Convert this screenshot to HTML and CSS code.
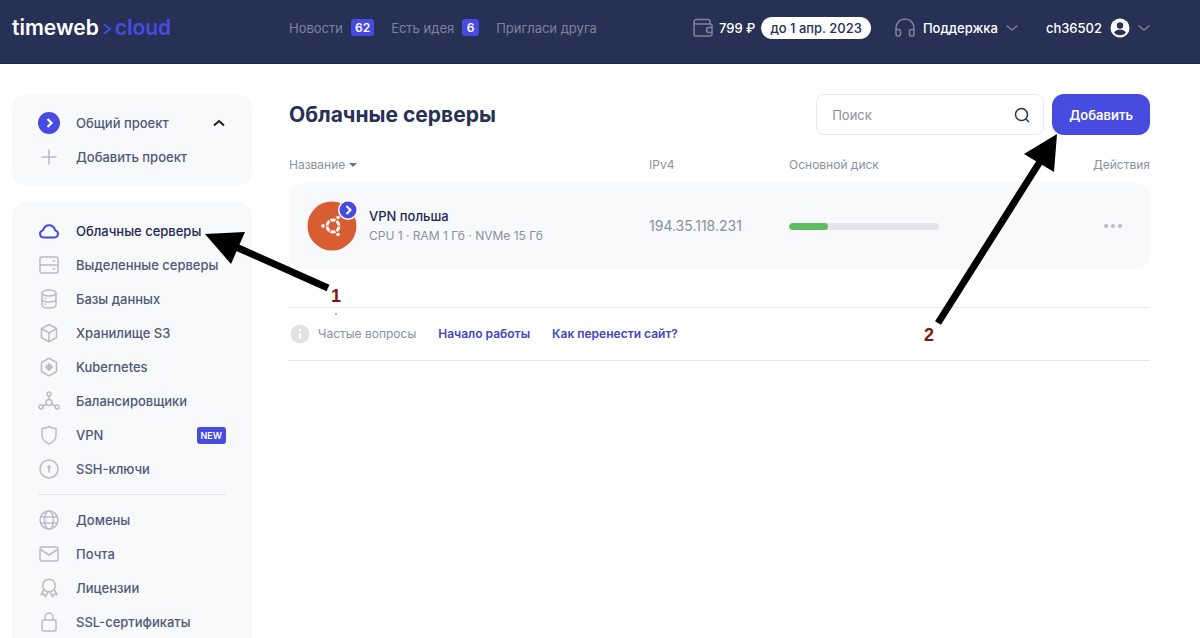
FILE: index.html
```html
<!DOCTYPE html>
<html lang="ru">
<head>
<meta charset="utf-8">
<meta name="viewport" content="width=device-width, initial-scale=1">
<title>Облачные серверы</title>
<link rel="stylesheet" href="styles.css">
</head>
<body>
	<header class="header">
		<a href="#" class="logo">timeweb<svg width="10" height="14" viewBox="0 0 10 14"><path d="M2 2.500l6 4.500-6 4.500"/></svg><span>cloud</span></a>
		<nav class="top_nav">
			<a href="#">Новости <b class="count">62</b></a>
			<a href="#">Есть идея <b class="count">6</b></a>
			<a href="#">Пригласи друга</a>
		</nav>
		<div class="account">
			<a href="#" class="balance">
				<svg class="ico" width="20" height="20" viewBox="0 0 20 20"><path d="M17 6V3.500a2 2 0 0 0-2-2H3.500a2.500 2.500 0 0 0-2.500 2.500v12a2 2 0 0 0 2 2h14a2 2 0 0 0 2-2V8a2 2 0 0 0-2-2H3.500A2.300 2.300 0 0 1 1 4M19 9.500h-3a2.500 2.500 0 0 0 0 5h3"/></svg>
				<span>799 ₽</span>
				<span class="until">до 1 апр. 2023</span>
			</a>
			<button type="button" class="support">
				<svg class="ico" width="20" height="20" viewBox="0 0 20 20"><path d="M1 16.500V10a9 9 0 0 1 18 0v6.500M1 11.500h2.500a2 2 0 0 1 2 2V16a2 2 0 0 1-2 2H3a2 2 0 0 1-2-2zM19 11.500h-2.500a2 2 0 0 0-2 2V16a2 2 0 0 0 2 2h.5a2 2 0 0 0 2-2z"/></svg>
				<span>Поддержка</span>
				<svg class="ico" width="12" height="8" viewBox="0 0 12 8"><path d="M1 2l5 4 5-4"/></svg>
			</button>
			<button type="button" class="user">
				<span>ch36502</span>
				<svg width="20" height="20" viewBox="0 0 20 20"><circle cx="10" cy="10" r="9.500" fill="#fff"/><circle cx="10" cy="7.500" r="3.200" fill="#273156"/><path d="M4 14.500c1.300-2 3.400-3 6-3s4.700 1 6 3c-1.500 1.800-3.500 2.800-6 2.800s-4.500-1-6-2.800z" fill="#273156"/></svg>
				<svg class="ico" width="12" height="8" viewBox="0 0 12 8"><path d="M1 2l5 4 5-4"/></svg>
			</button>
		</div>
	</header>

	<div class="page">
		<aside class="sidebar">
			<div class="panel">
				<button type="button" class="item">
					<svg width="22" height="22" viewBox="0 0 22 22"><circle cx="11" cy="11" r="11" fill="#474be0"/><path d="M9.500 7l4 4-4 4" fill="none" stroke="#fff" stroke-width="2.200"/></svg>
					<span>Общий проект</span>
					<svg class="fold" width="14" height="8" viewBox="0 0 14 8"><path d="M2 6.500l5-4.500 5 4.500"/></svg>
				</button>
				<a href="#" class="item">
					<svg class="ico" width="22" height="22" viewBox="0 0 22 22"><path d="M11 4v14M4 11h14"/></svg>
					<span>Добавить проект</span>
				</a>
			</div>

			<nav class="panel">
				<a href="#" class="item current">
					<svg class="ico" width="22" height="22" viewBox="0 0 22 22"><path d="M5.500 17.500a3.600 3.600 0 0 1-.7-7.100C6 7 8 5.200 11 5.200s5.200 1.800 6.200 5.200a3.600 3.600 0 0 1-.7 7.100z"/></svg>
					<span>Облачные серверы</span>
				</a>
				<a href="#" class="item">
					<svg class="ico" width="22" height="22" viewBox="0 0 22 22"><rect x="2" y="3" width="18" height="16" rx="2"/><path d="M2 11h18M15 7h1.500M15 15h1.500"/></svg>
					<span>Выделенные серверы</span>
				</a>
				<a href="#" class="item">
					<svg class="ico" width="22" height="22" viewBox="0 0 22 22"><ellipse cx="11" cy="5" rx="7" ry="3"/><path d="M4 5v12c0 1.700 3.100 3 7 3s7-1.300 7-3V5M4 11c0 1.700 3.100 3 7 3s7-1.300 7-3M7 10v.5M7 16v.5"/></svg>
					<span>Базы данных</span>
				</a>
				<a href="#" class="item">
					<svg class="ico" width="22" height="22" viewBox="0 0 22 22"><path d="M11 2.500l7.500 4v9l-7.500 4.300-7.500-4.300v-9zM3.500 6.500l7.500 4.300 7.500-4.300M11 10.800v9"/></svg>
					<span>Хранилище S3</span>
				</a>
				<a href="#" class="item">
					<svg class="ico" width="22" height="22" viewBox="0 0 22 22"><path d="M11 2.200l7.500 4.300v9L11 19.800l-7.500-4.300v-9z"/><path d="M11 7.500v7M7.500 11h7M9 9l4 4M13 9l-4 4"/><circle cx="11" cy="11" r="2"/></svg>
					<span>Kubernetes</span>
				</a>
				<a href="#" class="item">
					<svg class="ico" width="22" height="22" viewBox="0 0 22 22"><circle cx="11" cy="4" r="2"/><circle cx="11" cy="12.500" r="3"/><circle cx="3" cy="17" r="2"/><circle cx="19" cy="17" r="2"/><path d="M11 6v3.500M8.500 14L5 16M13.500 14l3.500 2"/></svg>
					<span>Балансировщики</span>
				</a>
				<a href="#" class="item">
					<svg class="ico" width="22" height="22" viewBox="0 0 22 22"><path d="M11 2.500c2 1.300 4.500 2 7 2V11c0 4-2.500 7-7 9-4.500-2-7-5-7-9V4.500c2.500 0 5-.7 7-2z"/></svg>
					<span>VPN</span>
					<b class="new">NEW</b>
				</a>
				<a href="#" class="item">
					<svg class="ico" width="22" height="22" viewBox="0 0 22 22"><circle cx="11" cy="11" r="9"/><circle cx="11" cy="9" r="1"/><path d="M11 9v5"/></svg>
					<span>SSH-ключи</span>
				</a>
				<hr>
				<a href="#" class="item">
					<svg class="ico" width="22" height="22" viewBox="0 0 22 22"><circle cx="11" cy="11" r="9"/><ellipse cx="11" cy="11" rx="4.500" ry="9"/><path d="M3 8h16M3 14h16"/></svg>
					<span>Домены</span>
				</a>
				<a href="#" class="item">
					<svg class="ico" width="22" height="22" viewBox="0 0 22 22"><rect x="2" y="4" width="18" height="14" rx="2"/><path d="M2.500 6.500L11 12l8.500-5.500"/></svg>
					<span>Почта</span>
				</a>
				<a href="#" class="item">
					<svg class="ico" width="22" height="22" viewBox="0 0 22 22"><circle cx="11" cy="8.500" r="6.300"/><path d="M6 12.500l-3 5 3-.3 1.500 2.600 2.500-5M16 12.500l3 5-3-.3-1.500 2.600-2.500-5"/></svg>
					<span>Лицензии</span>
				</a>
				<a href="#" class="item">
					<svg class="ico" width="22" height="22" viewBox="0 0 22 22"><rect x="4" y="9" width="14" height="11" rx="2"/><path d="M7 9V6a4 4 0 0 1 8 0v3"/></svg>
					<span>SSL-сертификаты</span>
				</a>
			</nav>
		</aside>

		<main class="main">
			<div class="title_row">
				<h1>Облачные серверы</h1>
				<form class="search">
					<input type="text" placeholder="Поиск" aria-label="Поиск">
					<button type="button" aria-label="Найти"><svg width="16" height="16" viewBox="0 0 16 16"><circle cx="7.500" cy="7.500" r="6"/><path d="M12 12l3 3"/></svg></button>
				</form>
				<button type="button" class="add">Добавить</button>
			</div>

			<table class="servers">
				<thead>
					<tr>
						<th class="c_name">Название <i class="sort"></i></th>
						<th class="c_ip">IPv4</th>
						<th>Основной диск</th>
						<th class="c_act">Действия</th>
					</tr>
				</thead>
				<tbody>
					<tr>
						<td>
							<div class="server">
								<svg width="50" height="50" viewBox="0 0 50 50">
									<circle cx="25" cy="25" r="24.500" fill="#d95d33"/>
									<circle cx="26" cy="25" r="6" fill="none" stroke="#fff" stroke-width="3"/>
									<path d="M26 25h-9M26 25l4.500-8M26 25l4.500 8M26 25h9M26 25l-4.500-8M26 25l-4.500 8" stroke="#d95d33" stroke-width="1.200"/>
									<circle cx="26" cy="25" r="4" fill="#d95d33"/>
									<g fill="#fff" stroke="#d95d33"><circle cx="16" cy="25" r="2.300"/><circle cx="31" cy="16.500" r="2.300"/><circle cx="31" cy="33.500" r="2.300"/></g>
									<circle cx="41" cy="9" r="10" fill="#fff"/>
									<circle cx="41" cy="9" r="8.500" fill="#474be0"/>
									<path d="M39.500 5l4 4-4 4" fill="none" stroke="#fff" stroke-width="2"/>
								</svg>
								<div>
									<a href="#">VPN польша</a>
									<p>CPU 1 · RAM 1 Гб · NVMe 15 Гб</p>
								</div>
							</div>
						</td>
						<td class="ip">194.35.118.231</td>
						<td><div class="disk"><div style="width:26%"></div></div></td>
						<td class="c_act"><button type="button" class="dots" aria-label="Действия"><svg width="18" height="4" viewBox="0 0 18 4"><circle cx="2" cy="2" r="2"/><circle cx="9" cy="2" r="2"/><circle cx="16" cy="2" r="2"/></svg></button></td>
					</tr>
				</tbody>
			</table>

			<div class="faq">
				<svg width="20" height="20" viewBox="0 0 20 20"><circle cx="10" cy="10" r="9.500" fill="#e2e2e6"/><path d="M10 9v5.500M10 5v2" stroke="#fff" stroke-width="2"/></svg>
				<span>Частые вопросы</span>
				<a href="#">Начало работы</a>
				<a href="#">Как перенести сайт?</a>
			</div>
		</main>
	</div>

	<!-- стрелки с номерами шагов -->
	<svg class="arrows" width="1200" height="638" viewBox="0 0 1200 638">
		<path d="M328 288L236 247M938 323L1041 160" stroke="#000" stroke-width="7"/>
		<path d="M205 234l40-2-14 32zM1057 134l-33 20 30 18z"/>
		<circle cx="336" cy="314" r="1" fill="#999"/>
	</svg>
	<b class="step step1">1</b>
	<b class="step step2">2</b>
</body>
</html>
```
FILE: styles.css
```css
*{margin:0; padding:0; box-sizing:border-box;}
body{background:#fff; font:500 13px/20px Inter, "Noto Sans", sans-serif; color:#505878; position:relative; overflow-x:hidden;}
a{color:inherit; text-decoration:none;}
button{border:0; background:none; color:inherit; font:inherit; cursor:pointer;}
svg{display:block; flex:none;}
.ico{fill:none; stroke:#b9bbc9; stroke-width:1.5; stroke-linecap:round; stroke-linejoin:round;}

/* шапка */
.header{display:flex; align-items:center; height:64px; padding:0 50px 8px 12px; background:#273156; border-bottom:1px solid #1f284c;}
.logo{display:flex; align-items:center; width:277px; color:#fff; font-size:21px; font-weight:600;}
.logo svg{margin:3px 3px 0; fill:none; stroke:#474be0; stroke-width:2;}
.logo span{color:#474be0;}
.top_nav{display:flex; gap:17px; color:#7d839c; font-weight:400;}
.top_nav a{display:flex; align-items:center; gap:8px;}
.count{padding:0 4px; min-width:17px; border-radius:3px; background:#474be0; color:#fff; font-size:12px; line-height:17px; text-align:center; font-weight:600;}
.account{display:flex; align-items:center; gap:24px; margin-left:auto; color:#fff;}
.account .ico{stroke:#7d839c;}
.balance,.support,.user{display:flex; align-items:center; gap:8px;}
.balance{gap:6px;}
.until{padding:0 9px; border-radius:11px; background:#fff; color:#273156; line-height:22px;}
.user{margin-left:4px;}

.page{display:flex; gap:37px; padding:30px 50px 0 12px;}

/* меню */
.sidebar{flex:none; width:240px;}
.panel{margin-bottom:16px; padding:12px 26px; border-radius:14px; background:#f8f9fb;}
.item{display:flex; align-items:center; gap:16px; width:100%; height:34px; white-space:nowrap;}
.item.current{color:#1f2853;}
.current .ico{stroke:#474be0; stroke-width:2;}
.fold{margin-left:auto; fill:none; stroke:#1d1d28; stroke-width:2;}
.new{margin-left:auto; padding:0 4px; border-radius:3px; background:#474be0; color:#fff; font-size:9px; line-height:17px; font-weight:600;}
.panel hr{margin:8px 0; border:0; border-top:1px solid #e4e5ea;}

/* серверы */
.main{flex:1; min-width:0;}
.title_row{display:flex; align-items:center; gap:8px; height:41px;}
h1{margin-right:auto; color:#273156; font-size:21px; line-height:28px; font-weight:700;}
.search{display:flex; align-items:center; width:228px; height:41px; padding:0 13px 0 15px; border:1px solid #e8e8ee; border-radius:8px;}
.search input{flex:1; min-width:0; border:0; outline:0; background:none; color:#273156; font:inherit; font-weight:400;}
.search input::placeholder{color:#8b8fa3; opacity:1;}
.search svg{fill:none; stroke:#273156; stroke-width:1.5;}
.add{height:41px; padding:0 17px; border-radius:12px; background:#474be0; color:#fff; font-weight:600;}

.servers{width:100%; margin-top:13px; border-collapse:collapse; table-layout:fixed; text-align:left;}
.servers th{height:35px; padding-bottom:2px; color:#8b8fa3; font-size:12px; font-weight:400;}
.servers td{height:86px; background:#f8f9fb;}
.servers td:first-child{padding-left:18px; border-radius:14px 0 0 14px;}
.servers td:last-child{padding-right:28px; border-radius:0 14px 14px 0;}
.servers .c_name{width:360px;}
.servers .c_ip{width:140px;}
.servers .c_act{text-align:right;}
.sort{display:inline-block; vertical-align:middle; border:4px solid transparent; border-top-color:#6b7088; border-bottom:0;}
.server{display:flex; align-items:center; gap:12px;}
.server a{color:#1f2853;}
.server p{color:#8b8fa3; font-size:12px; font-weight:400;}
.servers .ip{color:#8b8fa3; font-size:14px; font-weight:400;}
.disk{width:150px; height:7px; border-radius:4px; background:#e3e4e8; overflow:hidden;}
.disk div{height:7px; border-radius:4px; background:#5bbd5e;}
.dots{display:block; margin-left:auto;}
.dots svg{fill:#b9bbc9;}

.faq{display:flex; align-items:center; gap:22px; height:54px; margin-top:38px; border:1px solid #e6e6ea; border-width:1px 0; font-size:12px; color:#8b8fa3; font-weight:400;}
.faq svg{margin:0 -14px 0 1px;}
.faq a{color:#4145c4; font-weight:600;}

/* пометки поверх страницы */
.arrows{position:absolute; left:0; top:0; pointer-events:none;}
.step{position:absolute; color:#7d1712; font:bold 18px/20px "Liberation Sans", Arial, sans-serif;}
.step1{left:331px; top:286px;}
.step2{left:924px; top:325px;}
```
